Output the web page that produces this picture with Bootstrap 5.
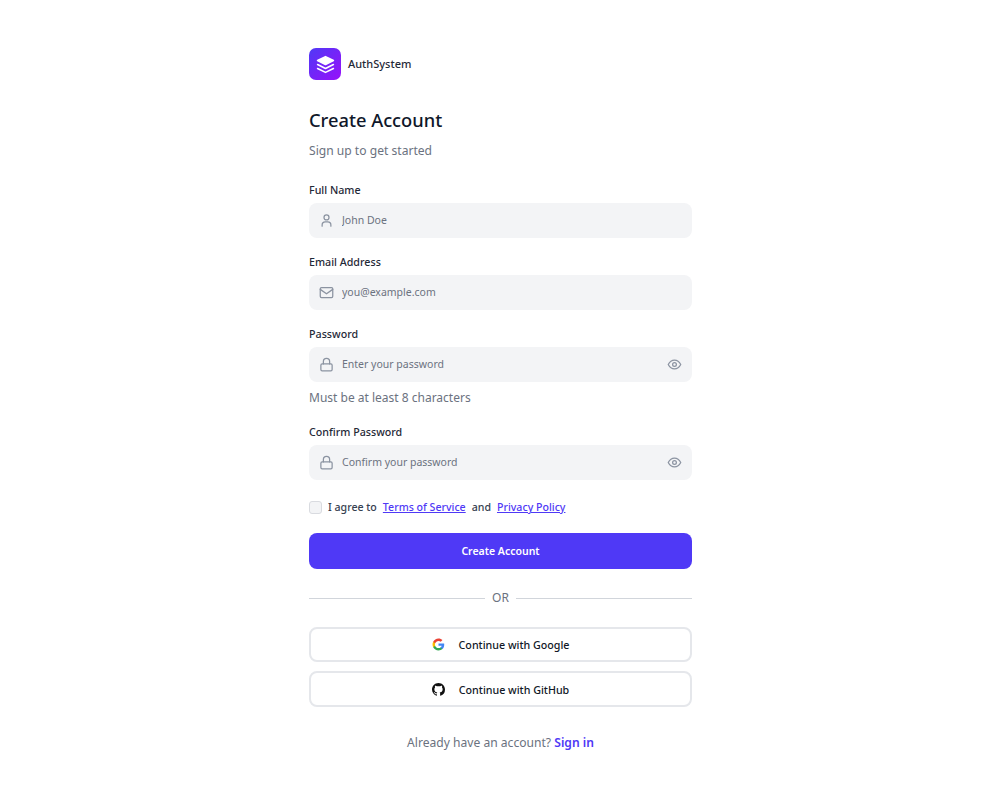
<!DOCTYPE html>
<html lang="en">
<head>
    <meta charset="UTF-8">
    <title>AuthSystem - Create Account</title>
    <link href="https://cdn.jsdelivr.net/npm/bootstrap@5.3.3/dist/css/bootstrap.min.css" rel="stylesheet">
    <style>
        body { background: #fff; font-family: "Noto Sans", "Liberation Sans", sans-serif; color: #111827; }
        .auth-wrap { width: 383px; margin-left: 309px; padding-top: 48px; }
        .logo-box { width: 32px; height: 32px; border-radius: 7px; background: linear-gradient(135deg, #4f39f6, #9810fa); }
        .logo-name { font-size: 11px; font-weight: 500; color: #1f2937; margin-left: 7px; }
        .auth-title { font-size: 18.3px; line-height: 28px; font-weight: 500; color: #0f172a; margin: 26px 0 0; }
        .auth-sub { font-size: 12.1px; line-height: 18px; color: #6b7280; margin: 8px 0 0; }
        .field-label { display: block; font-size: 10.7px; line-height: 16px; font-weight: 500; color: #1f2937; margin: 0 0 5px; }
        .first-label { margin-top: 22px; margin-bottom: 5px; }
        .next-label { margin-top: 16px; margin-bottom: 5px; }
        .confirm-label { margin-top: 18px; margin-bottom: 5px; }
        .field-box { position: relative; }
        .field-box .form-control { height: 35px; padding: 0 40px 1px 33px; background: #f3f4f6; border: 0; border-radius: 8px; font-size: 10.5px; color: #111827; }
        .field-box .form-control::placeholder { color: #6b7280; opacity: 1; }
        .field-icon { position: absolute; left: 10px; top: 10px; width: 15px; height: 15px; fill: none; stroke: #8b93a1; stroke-width: 2; stroke-linecap: round; stroke-linejoin: round; }
        .eye-icon { left: auto; right: 10px; }
        .field-hint { font-size: 12px; line-height: 16px; color: #6b7280; margin: 8px 0 0; }
        .terms-row { margin-top: 19px; font-size: 10.6px; line-height: 16px; font-weight: 500; color: #374151; }
        .terms-row .form-check-input { width: 13px; height: 13px; margin: 1px 6px 0 0; background-color: #f3f4f6; border-color: #d9dbe0; border-radius: 3px; }
        .terms-row a { color: #4f39f6; margin: 0 6px; }
        .submit-btn { height: 36px; margin-top: 18px; padding: 2px 0 0; background: #4f39f6; border: 0; border-radius: 8px; font-size: 10.5px; font-weight: 600; color: #fff; }
        .or-row { margin-top: 20px; font-size: 12px; line-height: 18px; color: #6b7280; gap: 7px; }
        .or-line { flex: 1; height: 1px; background: #d1d5db; }
        .social-btn { height: 35px; padding: 2px 0 0; background: #fff; border: 2px solid #e5e7eb; border-radius: 8px; font-size: 10.7px; font-weight: 500; color: #111827; gap: 14px; }
        .social-btn svg { width: 13px; height: 13px; margin-top: -2px; }
        .google-btn { margin-top: 20px; }
        .github-btn { margin-top: 9px; height: 36px; }
        .auth-foot { margin: 28px 0 0; font-size: 12.1px; line-height: 16px; color: #6b7280; text-align: center; }
        .auth-foot a { color: #4f39f6; font-weight: 600; text-decoration: none; }
    </style>
</head>
<body>
<div class="auth-wrap">
    <div class="d-flex align-items-center">
        <div class="logo-box d-flex align-items-center justify-content-center">
            <svg width="19" height="19" viewBox="0 0 24 24" fill="none" stroke="#fff" stroke-width="2" stroke-linecap="round" stroke-linejoin="round">
                <path d="M12 2 2 7l10 5 10-5z" fill="#fff"/>
                <path d="m2 12 10 5 10-5"/>
                <path d="m2 17 10 5 10-5"/>
            </svg>
        </div>
        <span class="logo-name">AuthSystem</span>
    </div>

    <h1 class="auth-title">Create Account</h1>
    <p class="auth-sub">Sign up to get started</p>

    <form>
        <label class="field-label first-label" for="fullName">Full Name</label>
        <div class="field-box">
            <svg class="field-icon" viewBox="0 0 24 24"><circle cx="12" cy="7" r="4"/><path d="M5 21v-2a5 5 0 0 1 5-5h4a5 5 0 0 1 5 5v2"/></svg>
            <input id="fullName" type="text" class="form-control" placeholder="John Doe">
        </div>

        <label class="field-label next-label" for="email">Email Address</label>
        <div class="field-box">
            <svg class="field-icon" viewBox="0 0 24 24"><rect x="2" y="4" width="20" height="16" rx="2"/><path d="m2 7 10 7 10-7"/></svg>
            <input id="email" type="email" class="form-control" placeholder="you@example.com">
        </div>

        <label class="field-label next-label" for="password">Password</label>
        <div class="field-box">
            <svg class="field-icon" viewBox="0 0 24 24"><rect x="3" y="11" width="18" height="11" rx="2"/><path d="M7 11V7a5 5 0 0 1 10 0v4"/></svg>
            <input id="password" type="password" class="form-control" placeholder="Enter your password">
            <svg class="field-icon eye-icon" viewBox="0 0 24 24"><path d="M2 12s3.6-7 10-7 10 7 10 7-3.6 7-10 7-10-7-10-7z"/><circle cx="12" cy="12" r="3"/></svg>
        </div>
        <p class="field-hint">Must be at least 8 characters</p>

        <label class="field-label confirm-label" for="confirm">Confirm Password</label>
        <div class="field-box">
            <svg class="field-icon" viewBox="0 0 24 24"><rect x="3" y="11" width="18" height="11" rx="2"/><path d="M7 11V7a5 5 0 0 1 10 0v4"/></svg>
            <input id="confirm" type="password" class="form-control" placeholder="Confirm your password">
            <svg class="field-icon eye-icon" viewBox="0 0 24 24"><path d="M2 12s3.6-7 10-7 10 7 10 7-3.6 7-10 7-10-7-10-7z"/><circle cx="12" cy="12" r="3"/></svg>
        </div>

        <div class="terms-row d-flex align-items-center">
            <input class="form-check-input" type="checkbox" id="agree">
            <span>I agree to</span><a href="#">Terms of Service</a><span>and</span><a href="#">Privacy Policy</a>
        </div>

        <button type="button" class="btn submit-btn w-100 d-block">Create Account</button>

        <div class="or-row d-flex align-items-center">
            <span class="or-line"></span><span>OR</span><span class="or-line"></span>
        </div>

        <button type="button" class="btn social-btn google-btn w-100 d-flex align-items-center justify-content-center">
            <svg viewBox="0 0 24 24">
                <path fill="#4285F4" d="M22.56 12.25c0-.78-.07-1.53-.2-2.25H12v4.26h5.92c-.26 1.37-1.04 2.53-2.21 3.31v2.77h3.57c2.08-1.92 3.28-4.74 3.28-8.09z"/>
                <path fill="#34A853" d="M12 23c2.97 0 5.46-.98 7.28-2.66l-3.57-2.77c-.98.66-2.23 1.06-3.71 1.06-2.86 0-5.29-1.93-6.16-4.53H2.18v2.84C3.99 20.53 7.7 23 12 23z"/>
                <path fill="#FBBC05" d="M5.84 14.09c-.22-.66-.35-1.36-.35-2.09s.13-1.43.35-2.09V7.07H2.18C1.43 8.55 1 10.22 1 12s.43 3.45 1.18 4.93l3.66-2.84z"/>
                <path fill="#EA4335" d="M12 5.38c1.62 0 3.06.56 4.21 1.64l3.15-3.15C17.45 2.09 14.97 1 12 1 7.7 1 3.99 3.47 2.18 7.07l3.66 2.84c.87-2.6 3.3-4.53 6.16-4.53z"/>
            </svg>
            <span>Continue with Google</span>
        </button>
        <button type="button" class="btn social-btn github-btn w-100 d-flex align-items-center justify-content-center">
            <svg viewBox="0 0 16 16" fill="#111">
                <path d="M8 0C3.58 0 0 3.58 0 8c0 3.54 2.29 6.53 5.47 7.59.4.07.55-.17.55-.38 0-.19-.01-.82-.01-1.49-2.01.37-2.53-.49-2.69-.94-.09-.23-.48-.94-.82-1.13-.28-.15-.68-.52-.01-.53.63-.01 1.08.58 1.23.82.72 1.21 1.87.87 2.33.66.07-.52.28-.87.51-1.07-1.78-.2-3.64-.89-3.64-3.95 0-.87.31-1.59.82-2.15-.08-.2-.36-1.02.08-2.12 0 0 .67-.21 2.2.82.64-.18 1.32-.27 2-.27s1.36.09 2 .27c1.53-1.04 2.2-.82 2.2-.82.44 1.1.16 1.92.08 2.12.51.56.82 1.27.82 2.15 0 3.07-1.87 3.75-3.65 3.95.29.25.54.73.54 1.48 0 1.07-.01 1.93-.01 2.2 0 .21.15.46.55.38A8.01 8.01 0 0 0 16 8c0-4.42-3.58-8-8-8z"/>
            </svg>
            <span>Continue with GitHub</span>
        </button>
    </form>

    <p class="auth-foot">Already have an account? <a href="#">Sign in</a></p>
</div>
<script src="https://cdn.jsdelivr.net/npm/bootstrap@5.3.3/dist/js/bootstrap.bundle.min.js"></script>
</body>
</html>
